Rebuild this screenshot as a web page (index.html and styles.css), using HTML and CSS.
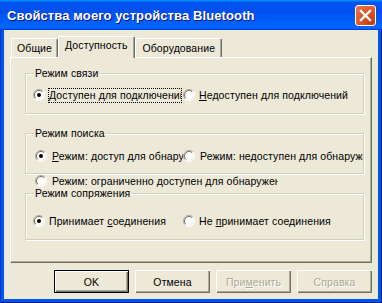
FILE: index.html
```html
<!DOCTYPE html>
<html>
<head>
<meta charset="utf-8">
<title>Свойства моего устройства Bluetooth</title>
<link rel="stylesheet" href="styles.css">
</head>
<body>
<svg class="defs" width="0" height="0">
  <defs>
    <symbol id="radio" viewBox="0 0 12 12">
      <circle cx="6" cy="6" r="5.5" fill="#fff"/>
      <path d="M2.1 9.9 A5.5 5.5 0 0 1 9.9 2.1" fill="none" stroke="#aca899"/>
      <path d="M2.8 9.2 A4.5 4.5 0 0 1 9.2 2.8" fill="none" stroke="#716f64"/>
      <path d="M9.9 2.1 A5.5 5.5 0 0 1 2.1 9.9" fill="none" stroke="#fff"/>
      <path d="M9.2 2.8 A4.5 4.5 0 0 1 2.8 9.2" fill="none" stroke="#f1efe2"/>
    </symbol>
  </defs>
</svg>

<div class="window">
  <div class="titlebar">
    <span class="title">Свойства моего устройства Bluetooth</span>
    <span class="close">
      <svg width="13" height="13" viewBox="0 0 13 13"><path d="M2 2 L11 11 M11 2 L2 11" stroke="#fff" stroke-width="2.4" stroke-linecap="square"/></svg>
    </span>
  </div>

  <div class="client">
    <div class="tabs">
      <div class="tab">Общие</div>
      <div class="tab selected">Доступность</div>
      <div class="tab">Оборудование</div>
    </div>

    <div class="page">
      <div class="group g1">
        <div class="group-title">Режим связи</div>
        <div class="row">
          <div class="radio">
            <svg class="rb"><use href="#radio"/><circle cx="6" cy="6" r="2" fill="#000"/></svg>
            <span class="label focus"><u>Д</u>оступен для подключений</span>
          </div>
          <div class="radio rest">
            <svg class="rb"><use href="#radio"/></svg>
            <span class="label"><u>Н</u>едоступен для подключений</span>
          </div>
        </div>
      </div>

      <div class="group g2">
        <div class="group-title">Режим поиска</div>
        <div class="row shifted">
          <div class="radio">
            <svg class="rb"><use href="#radio"/><circle cx="6" cy="6" r="2" fill="#000"/></svg>
            <span class="label"><u>Р</u>ежим: доступ для обнаружения</span>
          </div>
          <div class="radio rest">
            <svg class="rb"><use href="#radio"/></svg>
            <span class="label">Режим: недоступен для обнаружения</span>
          </div>
        </div>
      </div>

      <div class="loose">
        <div class="radio">
          <svg class="rb"><use href="#radio"/></svg>
          <span class="label">Режим: ограниченно доступен для обнаружения</span>
        </div>
      </div>

      <div class="group g3">
        <div class="group-title">Режим сопряжения</div>
        <div class="row">
          <div class="radio">
            <svg class="rb"><use href="#radio"/><circle cx="6" cy="6" r="2" fill="#000"/></svg>
            <span class="label">Принимает <u>с</u>оединения</span>
          </div>
          <div class="radio rest">
            <svg class="rb"><use href="#radio"/></svg>
            <span class="label">Не <u>п</u>ринимает соединения</span>
          </div>
        </div>
      </div>
    </div>

    <div class="buttons">
      <span class="btn default">OK</span>
      <span class="btn">Отмена</span>
      <span class="btn disabled">При<u>м</u>енить</span>
      <span class="btn disabled">Справка</span>
    </div>
  </div>
</div>
</body>
</html>
```

FILE: styles.css
```css
html, body { margin: 0; padding: 0; }
body { width: 382px; height: 303px; overflow: hidden; background: #0054e3; font-family: "Liberation Sans", Arial, sans-serif; font-size: 10.5px; letter-spacing: 0.1px; color: #000; }
.defs { position: absolute; }

.window { width: 382px; height: 303px; box-sizing: border-box; display: flex; flex-direction: column; background: #0055e5; padding: 0 4px 4px 4px; box-shadow: inset 1px 0 #0831d9, inset -1px -1px #001ea0; }

.titlebar { height: 30px; margin: 0 -4px; padding: 0 6px 0 7px; display: flex; align-items: center; justify-content: space-between; background: linear-gradient(180deg, #0997ff, #0053ee 8%, #0050ee 40%, #0066ff 88%, #0066ff 93%, #005bff 95%, #003dd7 96%, #003dd7); }
.title { color: #fff; font-weight: bold; font-size: 13px; letter-spacing: 0.1px; text-shadow: 1px 1px #0f1089; }
.close { width: 21px; height: 21px; box-sizing: border-box; border: 1px solid #fff; border-radius: 3px; display: flex; align-items: center; justify-content: center; background: radial-gradient(circle at 80% 85%, #c63d10 0%, #e0582a 55%, #ea7b57 100%); }

.client { flex: 1; background: #ece9d8; padding: 6px 6px 0 6px; display: flex; flex-direction: column; }

.tabs { display: flex; align-items: flex-end; height: 21px; padding-left: 1px; }
.tab { height: 19px; box-sizing: border-box; padding: 2px 5px 0 5px; line-height: 15px; border-top: 1px solid #fff; border-left: 1px solid #fff; border-right: 1px solid #716f64; box-shadow: inset -1px 0 #aca899; border-radius: 2px 2px 0 0; }
.tab:last-child { padding: 2px 6px 0 6px; }
.tab.selected { height: 22px; margin-bottom: -1px; padding: 1px 7px 0 6px; background: #ece9d8; position: relative; z-index: 1; }

.page { height: 206px; box-sizing: border-box; border-top: 1px solid #fff; border-left: 1px solid #fff; border-right: 1px solid #716f64; border-bottom: 1px solid #716f64; box-shadow: inset -1px -1px #aca899; padding: 0 7px 0 14px; }

.group { border: 1px solid #d0d0bf; box-shadow: inset 1px 1px #fff, 1px 1px #fff; padding: 0 0 0 7px; }
.group-title { margin: -7px 0 0 1px; padding: 0 1px; width: fit-content; background: #ece9d8; line-height: 13px; }
.g1 { margin-top: 15px; padding-bottom: 10px; }
.g1 .row { margin-top: 7px; }
.g2 { margin-top: 19px; padding-bottom: 9px; }
.g2 .row { margin-top: 8px; }
.g3 { margin-top: 5px; padding-bottom: 10px; position: relative; }
.g3 .row { margin-top: 13px; }

.row { display: flex; height: 16px; }
.row.shifted { padding-left: 2px; }
.radio { width: 150px; display: flex; align-items: center; white-space: nowrap; overflow: hidden; }
.shifted .radio:first-child { width: 148px; }
.radio.rest { flex: 1; min-width: 0; }
.rb { width: 12px; height: 12px; flex: none; margin-right: 4px; }
.shifted .rb, .loose .rb { margin-right: 5px; }
.label { flex: 1; min-width: 0; overflow: hidden; line-height: 13px; }
.label.focus { border: 1px dotted #000; margin: 0 1px 0 -1px; padding: 0; }

.loose { height: 14px; display: flex; padding-left: 10px; }
.loose .radio { width: 243px; }

.buttons { display: flex; justify-content: flex-end; gap: 6px; margin-top: 7px; }
.btn { width: 75px; height: 23px; box-sizing: border-box; display: flex; align-items: center; justify-content: center; background: #ece9d8; box-shadow: inset 1px 1px #fff, inset -1px -1px #716f64, inset -2px -2px #aca899; }
.btn.default { border: 1px solid #000; }
.btn.disabled { color: #aca899; text-shadow: 1px 1px #fff; }
```
